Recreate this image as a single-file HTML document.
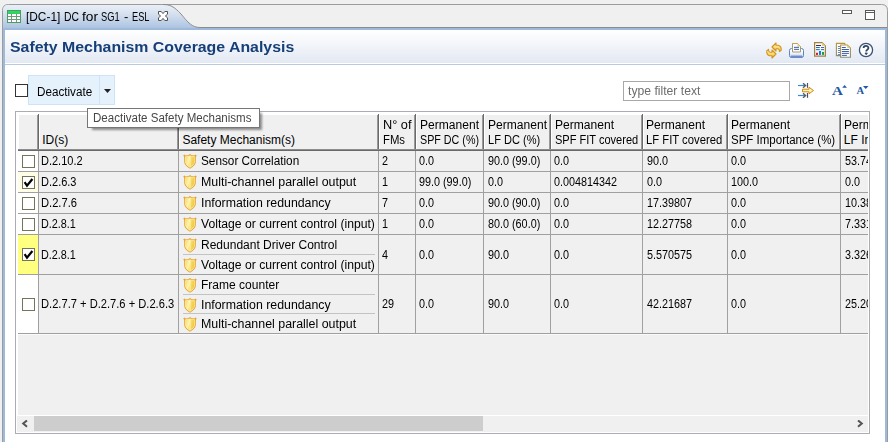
<!DOCTYPE html>
<html><head><meta charset="utf-8"><style>
html,body{margin:0;padding:0;}
body{width:888px;height:442px;overflow:hidden;position:relative;background:#f0f0f0;font-family:"Liberation Sans", sans-serif;}
.t{position:absolute;white-space:pre;transform-origin:0 0;font-family:"Liberation Sans", sans-serif;}
.clip{position:absolute;left:0;top:0;width:868px;height:442px;overflow:hidden;}
</style></head><body>
<svg width="888" height="442" style="position:absolute;left:0;top:0">
<defs>
<linearGradient id="tabg" x1="0" y1="0" x2="0" y2="1"><stop offset="0" stop-color="#e9eff7"/><stop offset="0.35" stop-color="#d6e1ef"/><stop offset="1" stop-color="#a7c0e0"/></linearGradient>
<linearGradient id="titg" x1="0" y1="0" x2="0" y2="1"><stop offset="0" stop-color="#ffffff"/><stop offset="1" stop-color="#e3e9f3"/></linearGradient>
</defs>
<path d="M2.5,442 L2.5,10.5 Q2.5,4.5 8.5,4.5 L881.5,4.5 Q887.5,4.5 887.5,10.5 L887.5,442" fill="#f0f0f0" stroke="#9c9c9c" stroke-width="1"/>
<path d="M3,28 L3,10.5 Q3,5 8.5,5 L163,5 C170,5 174,7 181,14.5 C188,23 192,27.5 200,27.5 L887,27.5 L887,30 L3,30 Z" fill="url(#tabg)"/>
<path d="M163,4.5 C170,4.5 174,6.5 181,14 C188,22.5 192,27.5 200,27.5" fill="none" stroke="#8c8c8c" stroke-width="1"/>
<path d="M200,27.5 L887,27.5" stroke="#8a8a8a" stroke-width="1"/>
<rect x="3" y="28" width="884" height="414" fill="#9db9dc"/>
<rect x="5" y="30" width="880" height="412" fill="#ffffff"/>
<rect x="5" y="30" width="880" height="33" fill="url(#titg)"/>
<rect x="5" y="64" width="880" height="1" fill="#b9c9df"/>
</svg>
<svg width="14" height="13" style="position:absolute;left:7px;top:10px">
<rect x="0.5" y="0.5" width="13" height="12" fill="#6a9d78" stroke="#4f9a62"/>
<rect x="1" y="1" width="12" height="2.6" fill="#22e05a"/>
<rect x="1" y="4" width="3" height="2" fill="#fff"/><rect x="5" y="4" width="4" height="2" fill="#fff"/><rect x="10" y="4" width="3" height="2" fill="#fff"/>
<rect x="1" y="7" width="3" height="2" fill="#fff"/><rect x="5" y="7" width="4" height="2" fill="#fff"/><rect x="10" y="7" width="3" height="2" fill="#fff"/>
<rect x="1" y="10" width="3" height="2" fill="#fff8fc"/><rect x="5" y="10" width="4" height="2" fill="#fff8fc"/><rect x="10" y="10" width="3" height="2" fill="#fff8fc"/>
</svg>
<svg width="12" height="12" style="position:absolute;left:158px;top:11px">
<path d="M0.5,0.5 L3.2,0.5 L5,2.6 L6.8,0.5 L9.5,0.5 L9.5,3.2 L7.4,5 L9.5,6.8 L9.5,9.5 L6.8,9.5 L5,7.4 L3.2,9.5 L0.5,9.5 L0.5,6.8 L2.6,5 L0.5,3.2 Z" fill="#fff" stroke="#505050" stroke-width="1"/>
</svg>
<div style="position:absolute;left:842px;top:10px;width:8px;height:2px;border:1px solid #5a5a5a;background:#fff"></div>
<div style="position:absolute;left:865px;top:10px;width:8px;height:8px;border:1px solid #5a5a5a;background:#fff"></div>
<div style="position:absolute;left:866px;top:12px;width:8px;height:1px;background:#5a5a5a"></div>
<svg width="18" height="19" style="position:absolute;left:765px;top:41px" viewBox="0 0 18 19">
<defs><linearGradient id="syg" x1="0" y1="0" x2="0" y2="1"><stop offset="0" stop-color="#fff6c0"/><stop offset="1" stop-color="#f2c232"/></linearGradient></defs>
<path d="M7,6 L11,2 L11,4.3 L13.2,4.3 Q16.6,5 16.2,9.3 L14.4,10.6 Q14.6,7.8 12.5,7.7 L11,7.7 L11,10 Z" fill="url(#syg)" stroke="#d4941c" stroke-width="1.1" stroke-linejoin="round"/>
<path d="M11,13 L7,17 L7,14.7 L4.8,14.7 Q1.4,14 1.8,9.7 L3.6,8.4 Q3.4,11.2 5.5,11.3 L7,11.3 L7,9 Z" fill="url(#syg)" stroke="#d4941c" stroke-width="1.1" stroke-linejoin="round"/>
</svg>
<svg width="18" height="18" style="position:absolute;left:787px;top:41px" viewBox="0 0 18 18">
<defs><linearGradient id="prg" x1="0" y1="0" x2="0" y2="1"><stop offset="0" stop-color="#ffffff"/><stop offset="0.5" stop-color="#f4f7fc"/><stop offset="1" stop-color="#b4c8e8"/></linearGradient></defs>
<rect x="2.5" y="7.5" width="14" height="9" rx="2" fill="url(#prg)" stroke="#5e82c2" stroke-width="1"/>
<rect x="4" y="14.6" width="11" height="2.2" fill="#6d8dcc"/>
<path d="M5.5,11 L5.5,2.5 L10.5,2.5 L13.5,5.5 L13.5,11 Z" fill="#fafcff" stroke="#a89a70" stroke-width="1"/>
<path d="M5.5,2.5 L10.5,2.5 L13.5,5.5" fill="none" stroke="#c8a050" stroke-width="1"/>
<path d="M10.5,2.5 L10.5,5.5 L13.5,5.5 Z" fill="#e8c878"/>
<rect x="7" y="5.8" width="5" height="1.2" fill="#5a78b0"/><rect x="7" y="7.8" width="5" height="1.2" fill="#5a78b0"/>
</svg>
<svg width="18" height="18" style="position:absolute;left:811px;top:40px" viewBox="0 0 18 18">
<defs><linearGradient id="rpg" x1="0" y1="0" x2="0" y2="1"><stop offset="0" stop-color="#ffffff"/><stop offset="1" stop-color="#e0f0fa"/></linearGradient></defs>
<path d="M3.6,2.6 L11,2.6 L14.4,6 L14.4,16.2 L3.6,16.2 Z" fill="url(#rpg)" stroke="#a4823c" stroke-width="1.2"/>
<path d="M11,2.6 L11,6 L14.4,6 Z" fill="#e6cc88"/>
<rect x="5" y="5" width="5" height="1" fill="#4a2a34"/>
<rect x="5" y="7.1" width="3.8" height="0.9" fill="#1c5aa6"/><rect x="10" y="7.1" width="3" height="0.9" fill="#1c5aa6"/>
<rect x="5" y="9.2" width="3.8" height="0.9" fill="#1c5aa6"/><rect x="10" y="9.2" width="3" height="0.9" fill="#1c5aa6"/>
<rect x="5" y="12.8" width="2" height="2.1" fill="#ee0a3a"/><rect x="8" y="11" width="2" height="3.9" fill="#0a7fd6"/><rect x="11" y="12" width="2" height="2.9" fill="#1e9a44"/>
</svg>
<svg width="18" height="18" style="position:absolute;left:834px;top:41px" viewBox="0 0 18 18">
<defs><linearGradient id="cpg" x1="0" y1="0" x2="0" y2="1"><stop offset="0" stop-color="#b8983e"/><stop offset="1" stop-color="#8a8a7a"/></linearGradient></defs>
<path d="M2.4,2.4 L10.5,2.4 L11,3 L11,14.6 L2.4,14.6 Z" fill="#fdfdfd" stroke="url(#cpg)" stroke-width="1.1"/>
<rect x="3.9" y="5" width="2.2" height="0.9" fill="#5b78b4"/><rect x="3.9" y="7" width="2.2" height="0.9" fill="#5b78b4"/><rect x="3.9" y="9" width="2.2" height="0.9" fill="#5b78b4"/><rect x="3.9" y="11" width="2.2" height="0.9" fill="#5b78b4"/><rect x="3.9" y="13" width="2.2" height="0.9" fill="#5b78b4"/>
<path d="M6.6,4 L13.3,4 L16.4,7.1 L16.4,16.2 L6.6,16.2 Z" fill="#fcfdff" stroke="url(#cpg)" stroke-width="1.1"/>
<path d="M13.3,4 L13.3,7.1 L16.4,7.1 Z" fill="#e2c47a"/>
<rect x="7.9" y="6" width="3.9" height="1" fill="#3d5ea8"/><rect x="7.9" y="8" width="7" height="1" fill="#3d5ea8"/><rect x="7.9" y="10" width="7" height="1" fill="#3d5ea8"/><rect x="7.9" y="11.9" width="7" height="1" fill="#3d5ea8"/><rect x="7.9" y="13.9" width="5" height="1" fill="#3d5ea8"/>
</svg>
<svg width="16" height="16" style="position:absolute;left:858px;top:42px" viewBox="0 0 16 16">
<circle cx="8" cy="8" r="6.6" fill="#fdfeff" stroke="#3d5372" stroke-width="1.3"/>
<path d="M5.6,6 C5.6,3.2 10.4,3.2 10.4,6 C10.4,7.6 8.2,7.8 8.2,9.6" fill="none" stroke="#2e4468" stroke-width="1.8"/>
<path d="M7,11 L9.4,11 L8.2,12.8 Z" fill="#2e4468" stroke="#2e4468" stroke-width="0.8"/>
</svg>
<div style="position:absolute;left:15px;top:84px;width:11px;height:11px;border:1px solid #333;background:#fff"></div>
<div style="position:absolute;left:28px;top:75px;width:85px;height:28px;border:1px solid #cce4f7;background:#e5f1fb"></div>
<div style="position:absolute;left:99px;top:76px;width:1px;height:28px;background:#cce4f7;"></div>
<svg width="8" height="5" style="position:absolute;left:104px;top:89px"><path d="M0,0 L7,0 L3.5,4 Z" fill="#222"/></svg>
<div style="position:absolute;left:623px;top:81px;width:165px;height:18px;border:1px solid #a8a8a8;background:#fff"></div>
<svg width="18" height="16" style="position:absolute;left:797px;top:82px" viewBox="0 0 18 16">
<path d="M1,3.5 L8,3.5" stroke="#3d8ad0" stroke-width="1.2"/><path d="M6,1.2 L8.6,3.5 L6,5.8" fill="none" stroke="#555d68" stroke-width="1.4"/>
<path d="M10.5,1 L10.5,5.8" stroke="#485068" stroke-width="1.2"/>
<path d="M1,13.5 L8,13.5" stroke="#3d8ad0" stroke-width="1.2"/><path d="M6,11.2 L8.6,13.5 L6,15.8" fill="none" stroke="#555d68" stroke-width="1.4"/>
<path d="M10.5,11 L10.5,15.8" stroke="#485068" stroke-width="1.2"/>
<path d="M5.5,7.2 L12,7.2 L12,5.2 L16.5,8.5 L12,11.8 L12,9.8 L5.5,9.8 Z" fill="#fff2b8" stroke="#d08a10" stroke-width="1"/>
</svg>
<svg width="16" height="12" style="position:absolute;left:832px;top:84px" viewBox="0 0 16 12">
<text x="0" y="11" font-family="Liberation Serif" font-weight="bold" font-size="13.5" fill="#2456a4" transform="scale(1.12,1)">A</text>
<path d="M10.2,3.8 L12.6,1 L15,3.8 Z" fill="#2456a4"/>
</svg>
<svg width="14" height="10" style="position:absolute;left:856px;top:85px" viewBox="0 0 14 10">
<text x="0.5" y="9" font-family="Liberation Serif" font-weight="bold" font-size="10.5" fill="#2456a4">A</text>
<path d="M7,1 L12.5,1 L9.75,4 Z" fill="#2456a4"/>
</svg>
<div style="position:absolute;left:15px;top:111px;width:853px;height:321px;border:1px solid #abadb3;background:#fff"></div>
<div style="position:absolute;left:19px;top:115px;width:849px;height:35px;background:#f0f0f0;"></div>
<div style="position:absolute;left:18px;top:151px;width:850px;height:264px;background:#f0f0f0;"></div>
<div style="position:absolute;left:18px;top:149px;width:850px;height:1px;background:#8c8c8c;"></div>
<div style="position:absolute;left:18px;top:150px;width:850px;height:1px;background:#6a6a6a;"></div>
<div style="position:absolute;left:37px;top:115px;width:1px;height:34px;background:#9a9a9a;"></div>
<div style="position:absolute;left:38px;top:114px;width:1px;height:35px;background:#6a6a6a;"></div>
<div style="position:absolute;left:39px;top:114px;width:1px;height:35px;background:#ffffff;"></div>
<div style="position:absolute;left:177px;top:115px;width:1px;height:34px;background:#9a9a9a;"></div>
<div style="position:absolute;left:178px;top:114px;width:1px;height:35px;background:#6a6a6a;"></div>
<div style="position:absolute;left:179px;top:114px;width:1px;height:35px;background:#ffffff;"></div>
<div style="position:absolute;left:377px;top:115px;width:1px;height:34px;background:#9a9a9a;"></div>
<div style="position:absolute;left:378px;top:114px;width:1px;height:35px;background:#6a6a6a;"></div>
<div style="position:absolute;left:379px;top:114px;width:1px;height:35px;background:#ffffff;"></div>
<div style="position:absolute;left:414px;top:115px;width:1px;height:34px;background:#9a9a9a;"></div>
<div style="position:absolute;left:415px;top:114px;width:1px;height:35px;background:#6a6a6a;"></div>
<div style="position:absolute;left:416px;top:114px;width:1px;height:35px;background:#ffffff;"></div>
<div style="position:absolute;left:482px;top:115px;width:1px;height:34px;background:#9a9a9a;"></div>
<div style="position:absolute;left:483px;top:114px;width:1px;height:35px;background:#6a6a6a;"></div>
<div style="position:absolute;left:484px;top:114px;width:1px;height:35px;background:#ffffff;"></div>
<div style="position:absolute;left:549px;top:115px;width:1px;height:34px;background:#9a9a9a;"></div>
<div style="position:absolute;left:550px;top:114px;width:1px;height:35px;background:#6a6a6a;"></div>
<div style="position:absolute;left:551px;top:114px;width:1px;height:35px;background:#ffffff;"></div>
<div style="position:absolute;left:641px;top:115px;width:1px;height:34px;background:#9a9a9a;"></div>
<div style="position:absolute;left:642px;top:114px;width:1px;height:35px;background:#6a6a6a;"></div>
<div style="position:absolute;left:643px;top:114px;width:1px;height:35px;background:#ffffff;"></div>
<div style="position:absolute;left:726px;top:115px;width:1px;height:34px;background:#9a9a9a;"></div>
<div style="position:absolute;left:727px;top:114px;width:1px;height:35px;background:#6a6a6a;"></div>
<div style="position:absolute;left:728px;top:114px;width:1px;height:35px;background:#ffffff;"></div>
<div style="position:absolute;left:839px;top:115px;width:1px;height:34px;background:#9a9a9a;"></div>
<div style="position:absolute;left:840px;top:114px;width:1px;height:35px;background:#6a6a6a;"></div>
<div style="position:absolute;left:841px;top:114px;width:1px;height:35px;background:#ffffff;"></div>
<div style="position:absolute;left:18px;top:151px;width:20px;height:20px;background:#ffffff;"></div>
<div style="position:absolute;left:18px;top:172px;width:20px;height:20px;background:#fffde6;"></div>
<div style="position:absolute;left:18px;top:193px;width:20px;height:20px;background:#ffffff;"></div>
<div style="position:absolute;left:18px;top:214px;width:20px;height:20px;background:#ffffff;"></div>
<div style="position:absolute;left:18px;top:235px;width:20px;height:39px;background:#ffff80;"></div>
<div style="position:absolute;left:18px;top:275px;width:20px;height:58px;background:#ffffff;"></div>
<div style="position:absolute;left:18px;top:171px;width:850px;height:1px;background:#a0a0a0;"></div>
<div style="position:absolute;left:18px;top:192px;width:850px;height:1px;background:#a0a0a0;"></div>
<div style="position:absolute;left:18px;top:213px;width:850px;height:1px;background:#a0a0a0;"></div>
<div style="position:absolute;left:18px;top:234px;width:850px;height:1px;background:#a0a0a0;"></div>
<div style="position:absolute;left:18px;top:274px;width:850px;height:1px;background:#a0a0a0;"></div>
<div style="position:absolute;left:18px;top:333px;width:850px;height:1px;background:#a0a0a0;"></div>
<div style="position:absolute;left:38px;top:151px;width:1px;height:182px;background:#a0a0a0;"></div>
<div style="position:absolute;left:178px;top:151px;width:1px;height:182px;background:#a0a0a0;"></div>
<div style="position:absolute;left:378px;top:151px;width:1px;height:182px;background:#a0a0a0;"></div>
<div style="position:absolute;left:415px;top:151px;width:1px;height:182px;background:#a0a0a0;"></div>
<div style="position:absolute;left:483px;top:151px;width:1px;height:182px;background:#a0a0a0;"></div>
<div style="position:absolute;left:550px;top:151px;width:1px;height:182px;background:#a0a0a0;"></div>
<div style="position:absolute;left:642px;top:151px;width:1px;height:182px;background:#a0a0a0;"></div>
<div style="position:absolute;left:727px;top:151px;width:1px;height:182px;background:#a0a0a0;"></div>
<div style="position:absolute;left:840px;top:151px;width:1px;height:182px;background:#a0a0a0;"></div>
<div style="position:absolute;left:183px;top:254px;width:192px;height:1px;background:#c3c3c3;"></div>
<div style="position:absolute;left:183px;top:294px;width:192px;height:1px;background:#c3c3c3;"></div>
<div style="position:absolute;left:183px;top:313px;width:192px;height:1px;background:#c3c3c3;"></div>
<div style="position:absolute;left:18px;top:334px;width:850px;height:1px;background:#fafafa;"></div>
<div style="position:absolute;left:22px;top:155px;width:11px;height:11px;border:1px solid #74745c;background:#fff"></div>
<div style="position:absolute;left:22px;top:176px;width:11px;height:11px;border:1px solid #74745c;background:#fff"></div><svg width="13" height="13" style="position:absolute;left:22px;top:176px"><path d="M2.6,6.2 L5,9.6 L10.4,3" fill="none" stroke="#000" stroke-width="2.2" stroke-linejoin="miter" stroke-linecap="butt"/></svg>
<div style="position:absolute;left:22px;top:197px;width:11px;height:11px;border:1px solid #74745c;background:#fff"></div>
<div style="position:absolute;left:22px;top:218px;width:11px;height:11px;border:1px solid #74745c;background:#fff"></div>
<div style="position:absolute;left:22px;top:248px;width:11px;height:11px;border:1px solid #74745c;background:#fff"></div><svg width="13" height="13" style="position:absolute;left:22px;top:248px"><path d="M2.6,6.2 L5,9.6 L10.4,3" fill="none" stroke="#000" stroke-width="2.2" stroke-linejoin="miter" stroke-linecap="butt"/></svg>
<div style="position:absolute;left:22px;top:298px;width:11px;height:11px;border:1px solid #74745c;background:#fff"></div>
<svg width="14" height="15" viewBox="0 0 14 15" style="position:absolute;left:183px;top:154px">
<defs><linearGradient id="sg0" x1="0" y1="0" x2="1" y2="0.3"><stop offset="0" stop-color="#f6d768"/><stop offset="0.45" stop-color="#fff4a8"/><stop offset="0.55" stop-color="#f8e070"/><stop offset="1" stop-color="#f0c840"/></linearGradient></defs>
<path d="M0.2,1.4 L1.6,0.5 L2.6,1.5 L5.6,1.1 L7,0 L8.4,1.1 L11.4,1.5 L12.4,0.5 L13.8,1.4 L13,2.6 L12.8,8.6 Q11.9,12.1 7,14.8 Q2.1,12.1 1.2,8.6 L1,2.6 Z" fill="#e7a42c"/>
<path d="M2.3,2.7 L7,1.9 L11.7,2.7 L11.6,8.4 Q10.9,11.2 7,13.4 Q3.1,11.2 2.4,8.4 Z" fill="url(#sg0)" stroke="#fff8d8" stroke-width="0.6"/>
<path d="M7,2.4 L7,12.6" stroke="#fffde0" stroke-width="1" opacity="0.7"/>
</svg>
<svg width="14" height="15" viewBox="0 0 14 15" style="position:absolute;left:183px;top:175px">
<defs><linearGradient id="sg1" x1="0" y1="0" x2="1" y2="0.3"><stop offset="0" stop-color="#f6d768"/><stop offset="0.45" stop-color="#fff4a8"/><stop offset="0.55" stop-color="#f8e070"/><stop offset="1" stop-color="#f0c840"/></linearGradient></defs>
<path d="M0.2,1.4 L1.6,0.5 L2.6,1.5 L5.6,1.1 L7,0 L8.4,1.1 L11.4,1.5 L12.4,0.5 L13.8,1.4 L13,2.6 L12.8,8.6 Q11.9,12.1 7,14.8 Q2.1,12.1 1.2,8.6 L1,2.6 Z" fill="#e7a42c"/>
<path d="M2.3,2.7 L7,1.9 L11.7,2.7 L11.6,8.4 Q10.9,11.2 7,13.4 Q3.1,11.2 2.4,8.4 Z" fill="url(#sg1)" stroke="#fff8d8" stroke-width="0.6"/>
<path d="M7,2.4 L7,12.6" stroke="#fffde0" stroke-width="1" opacity="0.7"/>
</svg>
<svg width="14" height="15" viewBox="0 0 14 15" style="position:absolute;left:183px;top:196px">
<defs><linearGradient id="sg2" x1="0" y1="0" x2="1" y2="0.3"><stop offset="0" stop-color="#f6d768"/><stop offset="0.45" stop-color="#fff4a8"/><stop offset="0.55" stop-color="#f8e070"/><stop offset="1" stop-color="#f0c840"/></linearGradient></defs>
<path d="M0.2,1.4 L1.6,0.5 L2.6,1.5 L5.6,1.1 L7,0 L8.4,1.1 L11.4,1.5 L12.4,0.5 L13.8,1.4 L13,2.6 L12.8,8.6 Q11.9,12.1 7,14.8 Q2.1,12.1 1.2,8.6 L1,2.6 Z" fill="#e7a42c"/>
<path d="M2.3,2.7 L7,1.9 L11.7,2.7 L11.6,8.4 Q10.9,11.2 7,13.4 Q3.1,11.2 2.4,8.4 Z" fill="url(#sg2)" stroke="#fff8d8" stroke-width="0.6"/>
<path d="M7,2.4 L7,12.6" stroke="#fffde0" stroke-width="1" opacity="0.7"/>
</svg>
<svg width="14" height="15" viewBox="0 0 14 15" style="position:absolute;left:183px;top:217px">
<defs><linearGradient id="sg3" x1="0" y1="0" x2="1" y2="0.3"><stop offset="0" stop-color="#f6d768"/><stop offset="0.45" stop-color="#fff4a8"/><stop offset="0.55" stop-color="#f8e070"/><stop offset="1" stop-color="#f0c840"/></linearGradient></defs>
<path d="M0.2,1.4 L1.6,0.5 L2.6,1.5 L5.6,1.1 L7,0 L8.4,1.1 L11.4,1.5 L12.4,0.5 L13.8,1.4 L13,2.6 L12.8,8.6 Q11.9,12.1 7,14.8 Q2.1,12.1 1.2,8.6 L1,2.6 Z" fill="#e7a42c"/>
<path d="M2.3,2.7 L7,1.9 L11.7,2.7 L11.6,8.4 Q10.9,11.2 7,13.4 Q3.1,11.2 2.4,8.4 Z" fill="url(#sg3)" stroke="#fff8d8" stroke-width="0.6"/>
<path d="M7,2.4 L7,12.6" stroke="#fffde0" stroke-width="1" opacity="0.7"/>
</svg>
<svg width="14" height="15" viewBox="0 0 14 15" style="position:absolute;left:183px;top:238px">
<defs><linearGradient id="sg4" x1="0" y1="0" x2="1" y2="0.3"><stop offset="0" stop-color="#f6d768"/><stop offset="0.45" stop-color="#fff4a8"/><stop offset="0.55" stop-color="#f8e070"/><stop offset="1" stop-color="#f0c840"/></linearGradient></defs>
<path d="M0.2,1.4 L1.6,0.5 L2.6,1.5 L5.6,1.1 L7,0 L8.4,1.1 L11.4,1.5 L12.4,0.5 L13.8,1.4 L13,2.6 L12.8,8.6 Q11.9,12.1 7,14.8 Q2.1,12.1 1.2,8.6 L1,2.6 Z" fill="#e7a42c"/>
<path d="M2.3,2.7 L7,1.9 L11.7,2.7 L11.6,8.4 Q10.9,11.2 7,13.4 Q3.1,11.2 2.4,8.4 Z" fill="url(#sg4)" stroke="#fff8d8" stroke-width="0.6"/>
<path d="M7,2.4 L7,12.6" stroke="#fffde0" stroke-width="1" opacity="0.7"/>
</svg>
<svg width="14" height="15" viewBox="0 0 14 15" style="position:absolute;left:183px;top:258px">
<defs><linearGradient id="sg5" x1="0" y1="0" x2="1" y2="0.3"><stop offset="0" stop-color="#f6d768"/><stop offset="0.45" stop-color="#fff4a8"/><stop offset="0.55" stop-color="#f8e070"/><stop offset="1" stop-color="#f0c840"/></linearGradient></defs>
<path d="M0.2,1.4 L1.6,0.5 L2.6,1.5 L5.6,1.1 L7,0 L8.4,1.1 L11.4,1.5 L12.4,0.5 L13.8,1.4 L13,2.6 L12.8,8.6 Q11.9,12.1 7,14.8 Q2.1,12.1 1.2,8.6 L1,2.6 Z" fill="#e7a42c"/>
<path d="M2.3,2.7 L7,1.9 L11.7,2.7 L11.6,8.4 Q10.9,11.2 7,13.4 Q3.1,11.2 2.4,8.4 Z" fill="url(#sg5)" stroke="#fff8d8" stroke-width="0.6"/>
<path d="M7,2.4 L7,12.6" stroke="#fffde0" stroke-width="1" opacity="0.7"/>
</svg>
<svg width="14" height="15" viewBox="0 0 14 15" style="position:absolute;left:183px;top:278px">
<defs><linearGradient id="sg6" x1="0" y1="0" x2="1" y2="0.3"><stop offset="0" stop-color="#f6d768"/><stop offset="0.45" stop-color="#fff4a8"/><stop offset="0.55" stop-color="#f8e070"/><stop offset="1" stop-color="#f0c840"/></linearGradient></defs>
<path d="M0.2,1.4 L1.6,0.5 L2.6,1.5 L5.6,1.1 L7,0 L8.4,1.1 L11.4,1.5 L12.4,0.5 L13.8,1.4 L13,2.6 L12.8,8.6 Q11.9,12.1 7,14.8 Q2.1,12.1 1.2,8.6 L1,2.6 Z" fill="#e7a42c"/>
<path d="M2.3,2.7 L7,1.9 L11.7,2.7 L11.6,8.4 Q10.9,11.2 7,13.4 Q3.1,11.2 2.4,8.4 Z" fill="url(#sg6)" stroke="#fff8d8" stroke-width="0.6"/>
<path d="M7,2.4 L7,12.6" stroke="#fffde0" stroke-width="1" opacity="0.7"/>
</svg>
<svg width="14" height="15" viewBox="0 0 14 15" style="position:absolute;left:183px;top:298px">
<defs><linearGradient id="sg7" x1="0" y1="0" x2="1" y2="0.3"><stop offset="0" stop-color="#f6d768"/><stop offset="0.45" stop-color="#fff4a8"/><stop offset="0.55" stop-color="#f8e070"/><stop offset="1" stop-color="#f0c840"/></linearGradient></defs>
<path d="M0.2,1.4 L1.6,0.5 L2.6,1.5 L5.6,1.1 L7,0 L8.4,1.1 L11.4,1.5 L12.4,0.5 L13.8,1.4 L13,2.6 L12.8,8.6 Q11.9,12.1 7,14.8 Q2.1,12.1 1.2,8.6 L1,2.6 Z" fill="#e7a42c"/>
<path d="M2.3,2.7 L7,1.9 L11.7,2.7 L11.6,8.4 Q10.9,11.2 7,13.4 Q3.1,11.2 2.4,8.4 Z" fill="url(#sg7)" stroke="#fff8d8" stroke-width="0.6"/>
<path d="M7,2.4 L7,12.6" stroke="#fffde0" stroke-width="1" opacity="0.7"/>
</svg>
<svg width="14" height="15" viewBox="0 0 14 15" style="position:absolute;left:183px;top:317px">
<defs><linearGradient id="sg8" x1="0" y1="0" x2="1" y2="0.3"><stop offset="0" stop-color="#f6d768"/><stop offset="0.45" stop-color="#fff4a8"/><stop offset="0.55" stop-color="#f8e070"/><stop offset="1" stop-color="#f0c840"/></linearGradient></defs>
<path d="M0.2,1.4 L1.6,0.5 L2.6,1.5 L5.6,1.1 L7,0 L8.4,1.1 L11.4,1.5 L12.4,0.5 L13.8,1.4 L13,2.6 L12.8,8.6 Q11.9,12.1 7,14.8 Q2.1,12.1 1.2,8.6 L1,2.6 Z" fill="#e7a42c"/>
<path d="M2.3,2.7 L7,1.9 L11.7,2.7 L11.6,8.4 Q10.9,11.2 7,13.4 Q3.1,11.2 2.4,8.4 Z" fill="url(#sg8)" stroke="#fff8d8" stroke-width="0.6"/>
<path d="M7,2.4 L7,12.6" stroke="#fffde0" stroke-width="1" opacity="0.7"/>
</svg>
<div style="position:absolute;left:17px;top:415px;width:851px;height:1px;background:#ffffff;"></div>
<div style="position:absolute;left:17px;top:416px;width:851px;height:16px;background:#f0f0f0;"></div>
<div style="position:absolute;left:34px;top:416px;width:449px;height:15px;background:#cdcdcd;"></div>
<svg width="8" height="8" style="position:absolute;left:21px;top:420px"><path d="M6,0.4 L2.2,3.6 L6,6.8" fill="none" stroke="#555" stroke-width="2"/></svg>
<svg width="8" height="8" style="position:absolute;left:856px;top:420px"><path d="M2,0.4 L5.8,3.6 L2,6.8" fill="none" stroke="#555" stroke-width="2"/></svg>
<div class="clip">
<div class="t" style="left:25.9px;top:10px;font-size:12px;font-weight:normal;color:#000;line-height:14px;transform:scaleX(0.9893);">[DC-1]</div>
<div class="t" style="left:64.1px;top:10px;font-size:12px;font-weight:normal;color:#000;line-height:14px;transform:scaleX(0.8649);">DC</div>
<div class="t" style="left:82.3px;top:10px;font-size:12px;font-weight:normal;color:#000;line-height:14px;transform:scaleX(1.1416);">for</div>
<div class="t" style="left:101.0px;top:10px;font-size:12px;font-weight:normal;color:#000;line-height:14px;transform:scaleX(0.7745);">SG1</div>
<div class="t" style="left:123.9px;top:10px;font-size:12px;font-weight:normal;color:#000;line-height:14px;transform:scaleX(1.0750);">-</div>
<div class="t" style="left:132.1px;top:10px;font-size:12px;font-weight:normal;color:#000;line-height:14px;transform:scaleX(0.7669);">ESL</div>
<div class="t" style="left:9.7px;top:38px;font-size:15.5px;font-weight:bold;color:#163f78;line-height:18px;transform:scaleX(1.0235);">Safety Mechanism Coverage Analysis</div>
<div class="t" style="left:36.6px;top:85px;font-size:12px;font-weight:normal;color:#000;line-height:14px;transform:scaleX(0.9735);">Deactivate</div>
<div class="t" style="left:627.5px;top:84px;font-size:12px;font-weight:normal;color:#6d6d6d;line-height:14px;transform:scaleX(1.0144);">type filter text</div>
<div class="t" style="left:42.2px;top:133px;font-size:12px;font-weight:normal;color:#000;line-height:14px;">ID(s)</div>
<div class="t" style="left:182.4px;top:133px;font-size:12px;font-weight:normal;color:#000;line-height:14px;">Safety Mechanism(s)</div>
<div class="t" style="left:382.9px;top:118px;font-size:12px;font-weight:normal;color:#000;line-height:14px;transform:scaleX(1.0629);">N° of</div>
<div class="t" style="left:382.9px;top:133px;font-size:12px;font-weight:normal;color:#000;line-height:14px;transform:scaleX(0.9431);">FMs</div>
<div class="t" style="left:419.6px;top:118px;font-size:12px;font-weight:normal;color:#000;line-height:14px;transform:scaleX(1.0051);">Permanent</div>
<div class="t" style="left:419.6px;top:133px;font-size:12px;font-weight:normal;color:#000;line-height:14px;transform:scaleX(0.8939);">SPF DC (%)</div>
<div class="t" style="left:487.6px;top:118px;font-size:12px;font-weight:normal;color:#000;line-height:14px;transform:scaleX(1.0051);">Permanent</div>
<div class="t" style="left:487.6px;top:133px;font-size:12px;font-weight:normal;color:#000;line-height:14px;transform:scaleX(0.9211);">LF DC (%)</div>
<div class="t" style="left:554.7px;top:118px;font-size:12px;font-weight:normal;color:#000;line-height:14px;transform:scaleX(1.0051);">Permanent</div>
<div class="t" style="left:554.7px;top:133px;font-size:12px;font-weight:normal;color:#000;line-height:14px;transform:scaleX(0.9195);">SPF FIT covered</div>
<div class="t" style="left:646.2px;top:118px;font-size:12px;font-weight:normal;color:#000;line-height:14px;transform:scaleX(1.0051);">Permanent</div>
<div class="t" style="left:646.2px;top:133px;font-size:12px;font-weight:normal;color:#000;line-height:14px;transform:scaleX(0.9391);">LF FIT covered</div>
<div class="t" style="left:731.4px;top:118px;font-size:12px;font-weight:normal;color:#000;line-height:14px;transform:scaleX(1.0051);">Permanent</div>
<div class="t" style="left:731.4px;top:133px;font-size:12px;font-weight:normal;color:#000;line-height:14px;transform:scaleX(0.9586);">SPF Importance (%)</div>
<div class="t" style="left:843.8px;top:118px;font-size:12px;font-weight:normal;color:#000;line-height:14px;transform:scaleX(1.0051);">Permanent</div>
<div class="t" style="left:843.8px;top:133px;font-size:12px;font-weight:normal;color:#000;line-height:14px;">LF Importance (%)</div>
<div class="t" style="left:41.4px;top:154px;font-size:12px;font-weight:normal;color:#000;line-height:14px;transform:scaleX(0.9168);">D.2.10.2</div>
<div class="t" style="left:200.7px;top:154px;font-size:12px;font-weight:normal;color:#000;line-height:14px;transform:scaleX(0.9814);">Sensor Correlation</div>
<div class="t" style="left:382.0px;top:154px;font-size:12px;font-weight:normal;color:#000;line-height:14px;transform:scaleX(0.9000);">2</div>
<div class="t" style="left:419.0px;top:154px;font-size:12px;font-weight:normal;color:#000;line-height:14px;transform:scaleX(0.9000);">0.0</div>
<div class="t" style="left:487.7px;top:154px;font-size:12px;font-weight:normal;color:#000;line-height:14px;transform:scaleX(0.9000);">90.0 (99.0)</div>
<div class="t" style="left:554.4px;top:154px;font-size:12px;font-weight:normal;color:#000;line-height:14px;transform:scaleX(0.9000);">0.0</div>
<div class="t" style="left:646.8px;top:154px;font-size:12px;font-weight:normal;color:#000;line-height:14px;transform:scaleX(0.9000);">90.0</div>
<div class="t" style="left:731.4px;top:154px;font-size:12px;font-weight:normal;color:#000;line-height:14px;transform:scaleX(0.9000);">0.0</div>
<div class="t" style="left:844.6px;top:154px;font-size:12px;font-weight:normal;color:#000;line-height:14px;transform:scaleX(0.9000);">53.74149</div>
<div class="t" style="left:41.4px;top:175px;font-size:12px;font-weight:normal;color:#000;line-height:14px;transform:scaleX(0.9172);">D.2.6.3</div>
<div class="t" style="left:200.7px;top:175px;font-size:12px;font-weight:normal;color:#000;line-height:14px;transform:scaleX(1.0340);">Multi-channel parallel output</div>
<div class="t" style="left:382.0px;top:175px;font-size:12px;font-weight:normal;color:#000;line-height:14px;transform:scaleX(0.9000);">1</div>
<div class="t" style="left:419.0px;top:175px;font-size:12px;font-weight:normal;color:#000;line-height:14px;transform:scaleX(0.9000);">99.0 (99.0)</div>
<div class="t" style="left:487.7px;top:175px;font-size:12px;font-weight:normal;color:#000;line-height:14px;transform:scaleX(0.9000);">0.0</div>
<div class="t" style="left:554.4px;top:175px;font-size:12px;font-weight:normal;color:#000;line-height:14px;transform:scaleX(0.9000);">0.004814342</div>
<div class="t" style="left:646.8px;top:175px;font-size:12px;font-weight:normal;color:#000;line-height:14px;transform:scaleX(0.9000);">0.0</div>
<div class="t" style="left:731.4px;top:175px;font-size:12px;font-weight:normal;color:#000;line-height:14px;transform:scaleX(0.9000);">100.0</div>
<div class="t" style="left:844.6px;top:175px;font-size:12px;font-weight:normal;color:#000;line-height:14px;transform:scaleX(0.9000);">0.0</div>
<div class="t" style="left:41.4px;top:196px;font-size:12px;font-weight:normal;color:#000;line-height:14px;transform:scaleX(0.9302);">D.2.7.6</div>
<div class="t" style="left:200.7px;top:196px;font-size:12px;font-weight:normal;color:#000;line-height:14px;transform:scaleX(1.0287);">Information redundancy</div>
<div class="t" style="left:382.0px;top:196px;font-size:12px;font-weight:normal;color:#000;line-height:14px;transform:scaleX(0.9000);">7</div>
<div class="t" style="left:419.0px;top:196px;font-size:12px;font-weight:normal;color:#000;line-height:14px;transform:scaleX(0.9000);">0.0</div>
<div class="t" style="left:487.7px;top:196px;font-size:12px;font-weight:normal;color:#000;line-height:14px;transform:scaleX(0.9000);">90.0 (90.0)</div>
<div class="t" style="left:554.4px;top:196px;font-size:12px;font-weight:normal;color:#000;line-height:14px;transform:scaleX(0.9000);">0.0</div>
<div class="t" style="left:646.8px;top:196px;font-size:12px;font-weight:normal;color:#000;line-height:14px;transform:scaleX(0.9000);">17.39807</div>
<div class="t" style="left:731.4px;top:196px;font-size:12px;font-weight:normal;color:#000;line-height:14px;transform:scaleX(0.9000);">0.0</div>
<div class="t" style="left:844.6px;top:196px;font-size:12px;font-weight:normal;color:#000;line-height:14px;transform:scaleX(0.9000);">10.38452</div>
<div class="t" style="left:41.4px;top:217px;font-size:12px;font-weight:normal;color:#000;line-height:14px;transform:scaleX(0.9017);">D.2.8.1</div>
<div class="t" style="left:200.7px;top:217px;font-size:12px;font-weight:normal;color:#000;line-height:14px;transform:scaleX(1.0145);">Voltage or current control (input)</div>
<div class="t" style="left:382.0px;top:217px;font-size:12px;font-weight:normal;color:#000;line-height:14px;transform:scaleX(0.9000);">1</div>
<div class="t" style="left:419.0px;top:217px;font-size:12px;font-weight:normal;color:#000;line-height:14px;transform:scaleX(0.9000);">0.0</div>
<div class="t" style="left:487.7px;top:217px;font-size:12px;font-weight:normal;color:#000;line-height:14px;transform:scaleX(0.9000);">80.0 (60.0)</div>
<div class="t" style="left:554.4px;top:217px;font-size:12px;font-weight:normal;color:#000;line-height:14px;transform:scaleX(0.9000);">0.0</div>
<div class="t" style="left:646.8px;top:217px;font-size:12px;font-weight:normal;color:#000;line-height:14px;transform:scaleX(0.9000);">12.27758</div>
<div class="t" style="left:731.4px;top:217px;font-size:12px;font-weight:normal;color:#000;line-height:14px;transform:scaleX(0.9000);">0.0</div>
<div class="t" style="left:844.6px;top:217px;font-size:12px;font-weight:normal;color:#000;line-height:14px;transform:scaleX(0.9000);">7.331245</div>
<div class="t" style="left:41.4px;top:248px;font-size:12px;font-weight:normal;color:#000;line-height:14px;transform:scaleX(0.9017);">D.2.8.1</div>
<div class="t" style="left:200.7px;top:238px;font-size:12px;font-weight:normal;color:#000;line-height:14px;transform:scaleX(1.0009);">Redundant Driver Control</div>
<div class="t" style="left:200.7px;top:258px;font-size:12px;font-weight:normal;color:#000;line-height:14px;transform:scaleX(1.0145);">Voltage or current control (input)</div>
<div class="t" style="left:382.0px;top:248px;font-size:12px;font-weight:normal;color:#000;line-height:14px;transform:scaleX(0.9000);">4</div>
<div class="t" style="left:419.0px;top:248px;font-size:12px;font-weight:normal;color:#000;line-height:14px;transform:scaleX(0.9000);">0.0</div>
<div class="t" style="left:487.7px;top:248px;font-size:12px;font-weight:normal;color:#000;line-height:14px;transform:scaleX(0.9000);">90.0</div>
<div class="t" style="left:554.4px;top:248px;font-size:12px;font-weight:normal;color:#000;line-height:14px;transform:scaleX(0.9000);">0.0</div>
<div class="t" style="left:646.8px;top:248px;font-size:12px;font-weight:normal;color:#000;line-height:14px;transform:scaleX(0.9000);">5.570575</div>
<div class="t" style="left:731.4px;top:248px;font-size:12px;font-weight:normal;color:#000;line-height:14px;transform:scaleX(0.9000);">0.0</div>
<div class="t" style="left:844.6px;top:248px;font-size:12px;font-weight:normal;color:#000;line-height:14px;transform:scaleX(0.9000);">3.326541</div>
<div class="t" style="left:41.4px;top:297px;font-size:12px;font-weight:normal;color:#000;line-height:14px;transform:scaleX(0.9287);">D.2.7.7 + D.2.7.6 + D.2.6.3</div>
<div class="t" style="left:200.7px;top:278px;font-size:12px;font-weight:normal;color:#000;line-height:14px;transform:scaleX(1.0022);">Frame counter</div>
<div class="t" style="left:200.7px;top:298px;font-size:12px;font-weight:normal;color:#000;line-height:14px;transform:scaleX(1.0287);">Information redundancy</div>
<div class="t" style="left:200.7px;top:317px;font-size:12px;font-weight:normal;color:#000;line-height:14px;transform:scaleX(1.0340);">Multi-channel parallel output</div>
<div class="t" style="left:382.0px;top:297px;font-size:12px;font-weight:normal;color:#000;line-height:14px;transform:scaleX(0.9000);">29</div>
<div class="t" style="left:419.0px;top:297px;font-size:12px;font-weight:normal;color:#000;line-height:14px;transform:scaleX(0.9000);">0.0</div>
<div class="t" style="left:487.7px;top:297px;font-size:12px;font-weight:normal;color:#000;line-height:14px;transform:scaleX(0.9000);">90.0</div>
<div class="t" style="left:554.4px;top:297px;font-size:12px;font-weight:normal;color:#000;line-height:14px;transform:scaleX(0.9000);">0.0</div>
<div class="t" style="left:646.8px;top:297px;font-size:12px;font-weight:normal;color:#000;line-height:14px;transform:scaleX(0.9000);">42.21687</div>
<div class="t" style="left:731.4px;top:297px;font-size:12px;font-weight:normal;color:#000;line-height:14px;transform:scaleX(0.9000);">0.0</div>
<div class="t" style="left:844.6px;top:297px;font-size:12px;font-weight:normal;color:#000;line-height:14px;transform:scaleX(0.9000);">25.20451</div>
</div>
<div style="position:absolute;left:92px;top:113px;width:170px;height:17px;background:rgba(0,0,0,0.42);filter:blur(1.2px)"></div><div style="position:absolute;left:87px;top:108px;width:171px;height:18px;border:1px solid #767676;background:#fff"></div><div class="t" style="left:93.1px;top:111px;font-size:12px;color:#474747;line-height:14px;transform:scaleX(0.962)">Deactivate Safety Mechanisms</div>
</body></html>
